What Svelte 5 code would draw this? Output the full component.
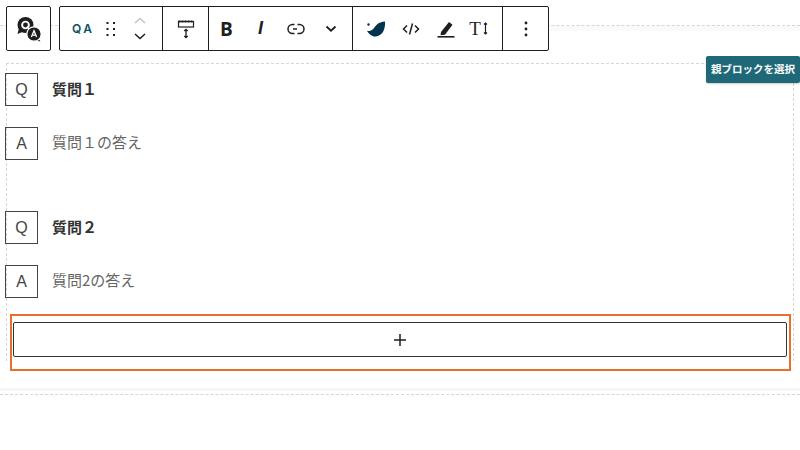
<script>
  const items = [
    { q: "質問１", a: "質問１の答え", gap: true },
    { q: "質問２", a: "質問2の答え", gap: false }
  ];
</script>

<div class="page">
  <div class="toolbar-wrap">
    <button class="block-icon" aria-label="Q&A">
      <svg width="26" height="26" viewBox="0 0 26 26">
        <path d="M3 12l-1.500 6 6-2.500z" fill="#1e1e1e"/>
        <circle cx="9.500" cy="9" r="8" fill="#1e1e1e"/>
        <circle cx="9.500" cy="9" r="3.400" fill="none" stroke="#fff" stroke-width="1.900"/>
        <path d="M11 10.500l2.500 2.500" stroke="#fff" stroke-width="1.700"/>
        <path d="M22 22l2.500 3.500-6-1.500z" fill="#1e1e1e"/>
        <circle cx="18" cy="18" r="7.200" fill="#1e1e1e" stroke="#fff" stroke-width="1.200"/>
        <path d="M15.400 21l2.600-6.200 2.600 6.200M16.200 19.200h3.600" fill="none" stroke="#fff" stroke-width="1.300"/>
      </svg>
    </button>

    <div class="toolbar">
      <div class="group first">
        <span class="qa">QA</span>
        <svg class="drag" width="12" height="16" viewBox="0 0 12 16" fill="#1e1e1e">
          <rect x="1.500" y="1" width="2" height="2"/><rect x="8" y="1" width="2" height="2"/>
          <rect x="1.500" y="7" width="2" height="2"/><rect x="8" y="7" width="2" height="2"/>
          <rect x="1.500" y="13" width="2" height="2"/><rect x="8" y="13" width="2" height="2"/>
        </svg>
        <div class="movers">
          <svg width="14" height="9" viewBox="0 0 14 9"><path d="M2 7l5-4.500L12 7" fill="none" stroke="#c4c4c4" stroke-width="1.500"/></svg>
          <svg width="14" height="9" viewBox="0 0 14 9"><path d="M2 2l5 4.500L12 2" fill="none" stroke="#1e1e1e" stroke-width="1.500"/></svg>
        </div>
      </div>

      <div class="group align">
        <svg width="20" height="24" viewBox="0 0 20 24">
          <rect x="2.500" y="4.500" width="15" height="5.500" fill="none" stroke="#1e1e1e" stroke-width="1.200"/>
          <path d="M2.500 4.500h15" stroke="#1e1e1e" stroke-width="1.800" stroke-dasharray="2 1"/>
          <path d="M10 12.500v8M8.300 14l1.700-1.700 1.700 1.700M8.300 19l1.700 1.700 1.700-1.700" fill="none" stroke="#1e1e1e" stroke-width="1.300"/>
        </svg>
      </div>

      <div class="group format">
        <span class="tool bold">B</span>
        <span class="tool italic">I</span>
        <span class="tool">
          <svg width="18" height="12" viewBox="0 0 18 12">
            <path d="M7.500 1.500H5.500a4.500 4.500 0 0 0 0 9h2M10.500 1.500h2a4.500 4.500 0 0 1 0 9h-2M6 6h4" fill="none" stroke="#1e1e1e" stroke-width="1.500"/>
          </svg>
        </span>
        <span class="tool">
          <svg width="12" height="8" viewBox="0 0 12 8"><path d="M1.500 1.500L6 5.700l4.500-4.200" fill="none" stroke="#1e1e1e" stroke-width="1.800"/></svg>
        </span>
      </div>

      <div class="group extra">
        <span class="tool">
          <svg width="20" height="16" viewBox="0 0 20 16">
            <circle cx="2.500" cy="3.500" r="1.200" fill="#00334d"/>
            <path d="M1 10c3 .3 5-.5 7-3s4-6 11-6.500c.5 6-1.500 14-9 15C6 16 3 13 1 10z" fill="#00334d"/>
          </svg>
        </span>
        <span class="tool">
          <svg width="18" height="14" viewBox="0 0 18 14">
            <path d="M5 3.500L1.500 7 5 10.500M13 3.500L16.500 7 13 10.500M10.500 1.500l-3 11" fill="none" stroke="#1e1e1e" stroke-width="1.500"/>
          </svg>
        </span>
        <span class="tool">
          <svg width="18" height="18" viewBox="0 0 18 18">
            <path d="M4 12L12 2l3.500 2.800-7.500 10-4.500.5z" fill="#1e1e1e"/>
            <rect x="0.500" y="16" width="17" height="1.600" fill="#1e1e1e"/>
          </svg>
        </span>
        <span class="tool textsize">T<svg width="5" height="13" viewBox="0 0 5 13"><path d="M2.500 1v11M1 2.500l1.500-1.500 1.500 1.500M1 10.500l1.500 1.500 1.500-1.500" fill="none" stroke="#1e1e1e" stroke-width="1.200"/></svg></span>
      </div>

      <div class="group more">
        <svg width="4" height="16" viewBox="0 0 4 16" fill="#1e1e1e">
          <circle cx="2" cy="2" r="1.400"/><circle cx="2" cy="8" r="1.400"/><circle cx="2" cy="14" r="1.400"/>
        </svg>
      </div>
    </div>
  </div>

  <div class="parent-tag">親ブロックを選択</div>

  <div class="post">
    <div class="block">
      {#each items as item}
        <div class="pair" class:spaced={item.gap}>
          <div class="row">
            <div class="label">Q</div>
            <div class="question">{item.q}</div>
          </div>
          <div class="row">
            <div class="label">A</div>
            <div class="answer">{item.a}</div>
          </div>
        </div>
      {/each}
      <div class="appender">
        <button class="add" aria-label="add">
          <svg width="14" height="14" viewBox="0 0 14 14"><path d="M7 1v12M1 7h12" stroke="#1e1e1e" stroke-width="1.500"/></svg>
        </button>
      </div>
    </div>
  </div>
  <div class="post-end"></div>
</div>

<style>
  :global(body) {
    margin: 0;
    background: #fff;
  }

  .page {
    position: relative;
    width: 800px;
    height: 450px;
    overflow: hidden;
    padding-top: 25px;
    box-sizing: border-box;
    font-family: "Noto Sans CJK JP", "Noto Sans", sans-serif;
    color: #1e1e1e;
  }

  .toolbar-wrap {
    position: absolute;
    top: 6px;
    left: 6px;
    display: flex;
    gap: 8px;
  }

  .block-icon {
    width: 45px;
    height: 45px;
    box-sizing: border-box;
    padding: 0;
    background: #fff;
    border: 1px solid #1e1e1e;
    border-radius: 2px;
    display: flex;
    align-items: center;
    justify-content: center;
  }

  .toolbar {
    display: flex;
    height: 45px;
    box-sizing: border-box;
    background: #fff;
    border: 1px solid #1e1e1e;
    border-radius: 2px;
  }

  .group {
    display: flex;
    align-items: center;
    box-sizing: border-box;
    border-right: 1px solid #1e1e1e;
  }

  .tool {
    width: 35px;
    flex: none;
    display: flex;
    align-items: center;
    justify-content: center;
  }

  .first {
    width: 103px;
    padding-left: 12px;
  }

  .qa {
    font-family: "Inter", sans-serif;
    font-size: 12px;
    font-weight: 600;
    letter-spacing: 2.500px;
    color: #0f5264;
    width: 33px;
  }

  .drag {
    margin-right: 16px;
  }

  .movers {
    display: flex;
    flex-direction: column;
    gap: 7px;
  }

  .align {
    width: 46px;
    justify-content: center;
  }

  .format {
    width: 144px;
    padding-left: 0;
  }

  .bold {
    font-family: "Open Sans", sans-serif;
    font-size: 19px;
    font-weight: 700;
  }

  .italic {
    font-family: "Liberation Sans", sans-serif;
    font-size: 18px;
    font-style: italic;
    font-weight: 700;
    margin-left: -1px;
  }

  .extra {
    width: 150px;
    padding-left: 5px;
  }

  .textsize {
    font-family: "Liberation Serif", serif;
    font-size: 19px;
    gap: 2px;
    margin-left: -2px;
  }

  .more {
    flex: 1;
    width: 45px;
    justify-content: center;
    border-right: none;
  }

  .parent-tag {
    position: absolute;
    top: 56px;
    right: 0;
    width: 94px;
    height: 27px;
    box-sizing: border-box;
    padding-left: 5px;
    background: #1e6878;
    color: #fff;
    border-radius: 2px;
    font-size: 10.500px;
    font-weight: 700;
    line-height: 26px;
    white-space: nowrap;
    box-shadow: 0 1px 2px rgba(0, 0, 0, 0.2);
  }

  .post {
    border-top: 1px dashed #d6d6d6;
    padding: 37px 6px 0 6px;
    height: 366px;
    box-sizing: border-box;
    border-bottom: 3px solid #f6f6f6;
    box-shadow: inset 0 5px 0 #fafafa;
  }

  .block {
    border: 1px dashed #d6d6d6;
    border-bottom: none;
    height: 298px;
    box-sizing: border-box;
    padding-top: 9px;
  }

  .pair {
    display: flex;
    flex-direction: column;
    gap: 21px;
    margin-left: -2px;
  }

  .spaced {
    margin-bottom: 51px;
  }

  .row {
    display: flex;
    align-items: center;
    gap: 14px;
  }

  .label {
    width: 33px;
    height: 33px;
    box-sizing: border-box;
    border: 1px solid #444;
    display: flex;
    align-items: center;
    justify-content: center;
    font-family: "Liberation Sans", sans-serif;
    font-size: 16px;
    color: #444;
  }

  .question {
    font-size: 15px;
    font-weight: 700;
    color: #333;
    margin-top: -3px;
  }

  .answer {
    font-size: 15px;
    color: #666;
    margin-top: -4px;
  }

  .appender {
    margin: 16px 2px 0 3px;
    height: 57px;
    box-sizing: border-box;
    border: 2px solid #e8702a;
    padding: 6px 2px 0 1px;
  }

  .add {
    display: flex;
    align-items: center;
    justify-content: center;
    width: 100%;
    height: 35px;
    padding: 0;
    background: #fff;
    border: 1px solid #333;
    border-radius: 2px;
  }

  .post-end {
    border-top: 1px dashed #d6d6d6;
    margin-top: 3px;
  }
</style>
